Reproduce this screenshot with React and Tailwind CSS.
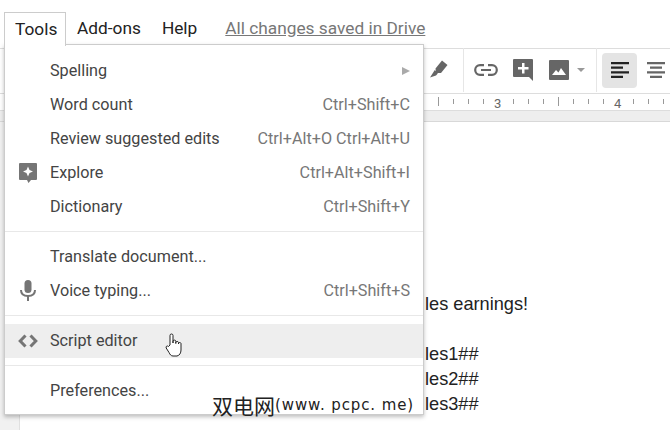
import { Fragment } from 'react';

const MENU = [
  [
    { label: 'Spelling', arrow: true },
    { label: 'Word count', keys: 'Ctrl+Shift+C' },
    { label: 'Review suggested edits', keys: 'Ctrl+Alt+O Ctrl+Alt+U' },
    { label: 'Explore', keys: 'Ctrl+Alt+Shift+I', icon: 'explore' },
    { label: 'Dictionary', keys: 'Ctrl+Shift+Y' },
  ],
  [
    { label: 'Translate document...' },
    { label: 'Voice typing...', keys: 'Ctrl+Shift+S', icon: 'mic' },
  ],
  [{ label: 'Script editor', icon: 'code', hover: true }],
  [{ label: 'Preferences...' }],
];

const TICKS = [438, 453, 468, 483, 513, 528, 543, 558, 573, 588, 603, 633, 648, 663];

function MenuIcon({ name }) {
  if (name === 'explore') {
    return (
      <svg width="18" height="20" viewBox="0 0 18 20" className="text-[#757575]">
        <path fill="currentColor" d="M1 0h16a1 1 0 0 1 1 1v15a1 1 0 0 1-1 1h-5l-2.500 3L8 17H1a1 1 0 0 1-1-1V1a1 1 0 0 1 1-1z" />
        <path fill="#fff" d="M9 3.500 10.500 7 14 8.500 10.500 10 9 13.500 7.500 10 4 8.500 7.500 7z" />
      </svg>
    );
  }
  if (name === 'mic') {
    return (
      <svg width="16" height="22" viewBox="0 0 16 22" className="text-[#757575]">
        <rect x="4.500" y="0" width="7" height="13" rx="3.500" fill="currentColor" />
        <path fill="none" stroke="currentColor" strokeWidth="2" d="M1 10c0 4 3 6 7 6s7-2 7-6" />
        <rect x="7" y="15" width="2" height="6" fill="currentColor" />
      </svg>
    );
  }
  return (
    <svg width="20" height="14" viewBox="0 0 20 14" className="text-[#757575]">
      <path fill="none" stroke="currentColor" strokeWidth="3" d="M7.500 1.500 2.200 7l5.300 5.500M12.500 1.500 17.800 7l-5.300 5.500" />
    </svg>
  );
}

function MenuRow({ item }) {
  return (
    <div className={`relative flex h-[34px] items-center pl-[45px] pr-[13px] ${item.hover ? 'bg-[#eeeeee]' : ''}`}>
      {item.icon && (
        <div className="absolute left-0 top-0 flex h-full w-[45px] items-center justify-center">
          <MenuIcon name={item.icon} />
        </div>
      )}
      <span className="flex-1 text-[#444444]">{item.label}</span>
      {item.keys && <span className="text-[#777777]">{item.keys}</span>}
      {item.arrow && <span className="h-0 w-0 border-y-[4px] border-l-[8px] border-y-transparent border-l-[#aaaaaa]" />}
    </div>
  );
}

export default function App() {
  return (
    <div className="relative h-[430px] w-[670px] overflow-hidden bg-white font-['Roboto',sans-serif]">
      {/* Menu bar */}
      <div className="flex h-[48px] items-start pl-[4px] pt-[12px] text-[17.3px] leading-[32px] text-[#222222]">
        <div className="relative z-20 h-[34px] w-[62px] border border-b-0 border-[#cccccc] bg-white pl-[10px]">Tools</div>
        <span className="ml-[11px]">Add-ons</span>
        <span className="ml-[21px]">Help</span>
        <span className="ml-[28px] text-[#777777] underline">All changes saved in Drive</span>
      </div>

      {/* Toolbar */}
      <div className="flex h-[46px] items-center justify-end border-y border-[#dddddd] pb-[2px] pr-[4px]">
        <svg width="18" height="18" viewBox="0 0 18 18" className="mb-[3px] mr-[15px] text-[#666666]">
          <path fill="currentColor" d="M12 .5 17.500 5 11 13H6L5.500 8.500zM4.800 10l3 3.500L6 15.500l-6 2L3.500 12z" />
        </svg>
        <div className="h-[44px] w-px bg-[#e6e6e6]" />
        <svg width="24" height="12" viewBox="0 0 24 12" className="ml-[10px] text-[#666666]">
          <path fill="none" stroke="currentColor" strokeWidth="2.200" d="M10 1.200H6a4.800 4.800 0 0 0 0 9.600h4M14 1.200h4a4.800 4.800 0 0 1 0 9.600h-4M7 6h10" />
        </svg>
        <svg width="20" height="22" viewBox="0 0 20 22" className="ml-[15px] text-[#666666]">
          <path fill="currentColor" d="M1 0h18a1 1 0 0 1 1 1v21l-4-4H1a1 1 0 0 1-1-1V1a1 1 0 0 1 1-1z" />
          <path fill="#fff" d="M9 4h2.500v4H15.500v2.500h-4v4H9v-4H5V8h4z" />
        </svg>
        <svg width="20" height="20" viewBox="0 0 20 20" className="ml-[16px] text-[#666666]">
          <path fill="currentColor" d="M1 0h18a1 1 0 0 1 1 1v18a1 1 0 0 1-1 1H1a1 1 0 0 1-1-1V1a1 1 0 0 1 1-1z" />
          <path fill="#fff" d="m3 15 4-5 2.500 2.500L12 8l5 7z" />
        </svg>
        <span className="ml-[8px] h-0 w-0 border-x-[4px] border-t-[4px] border-x-transparent border-t-[#999999]" />
        <div className="ml-[11px] h-[44px] w-px bg-[#e6e6e6]" />
        <div className="ml-[5px] flex h-[35px] w-[35px] items-center justify-center rounded-sm bg-[#e4e4e4]">
          <svg width="18" height="16" viewBox="0 0 18 16" className="text-[#222222]">
            <path fill="currentColor" d="M0 0h18v2.200H0zM0 4.600h12v2.200H0zM0 9.200h18v2.200H0zM0 13.800h12V16H0z" />
          </svg>
        </div>
        <div className="ml-[10px] w-[19px] overflow-hidden">
          <svg width="18" height="16" viewBox="0 0 18 16" className="text-[#666666]">
            <path fill="currentColor" d="M0 0h18v2.200H0zM3 4.600h12v2.200H3zM0 9.200h18v2.200H0zM3 13.800h12V16H3z" />
          </svg>
        </div>
      </div>

      {/* Ruler */}
      <div className="relative h-[17px] border-b border-[#dddddd] text-[13px] text-[#666666]">
        {TICKS.map((x) => (
          <div
            key={x}
            className={`absolute w-px bg-[#999999] ${x === 438 || x === 558 ? 'top-[3px] h-[9px]' : 'top-[5px] h-[5px]'}`}
            style={{ left: x }}
          />
        ))}
        <span className="absolute left-[494px] top-0 leading-[19px]">3</span>
        <span className="absolute left-[614px] top-0 leading-[19px]">4</span>
      </div>

      {/* Document area */}
      <div className="h-[11px] border-b border-[#d8d8d8] bg-[#eeeeee]" />
      <div className="flex h-[308px]">
        <div className="w-[19px] bg-[#f1f1f1]" />
        <div className="flex-1 border-l border-[#e0e0e0] pl-[405px] pt-[170px] font-['Liberation_Sans',sans-serif] text-[18.2px] leading-[25px] text-[#222222]">
          <p className="mb-[25px]">les earnings!</p>
          <p>les1##</p>
          <p>les2##</p>
          <p>les3##</p>
        </div>
      </div>

      {/* Tools dropdown */}
      <div className="absolute left-[4px] top-[44px] z-10 w-[420px] border border-[#cccccc] bg-white pb-[6px] pt-[9px] text-[16.2px] shadow-[0_2px_4px_rgba(0,0,0,0.25)]">
        {MENU.map((group, i) => (
          <Fragment key={i}>
            {i > 0 && <div className="mb-[8px] mt-[7px] h-px bg-[#e8e8e8]" />}
            {group.map((item) => (
              <MenuRow key={item.label} item={item} />
            ))}
          </Fragment>
        ))}
      </div>

      {/* Hand cursor */}
      <svg width="18" height="24" viewBox="0 0 18 24" className="absolute left-[165px] top-[333px] z-30">
        <path
          fill="#fff"
          stroke="#222"
          strokeWidth="1"
          strokeLinejoin="round"
          d="M5 12V2.500a1.500 1.500 0 0 1 3 0V10V8.500a1.400 1.400 0 0 1 2.800 0V10.500V9.500a1.400 1.400 0 0 1 2.700 0V11V10.500a1.300 1.300 0 0 1 2.500 0V17c0 3-1.500 5.500-4 6H8c-2 0-3-1.500-4-3.500L1.200 15c-.7-1.500 1-2.800 2.300-1.500z"
        />
      </svg>

      {/* Watermark */}
      <div className="absolute left-[212px] top-[392px] z-30 flex items-center font-['Noto_Sans_CJK_SC',sans-serif] text-[21px] leading-[26px] text-[#222222]">
        双电网
        <span className="font-['DejaVu_Sans',sans-serif] text-[15px] tracking-[0.9px]">(www. pcpc. me)</span>
      </div>
    </div>
  );
}
